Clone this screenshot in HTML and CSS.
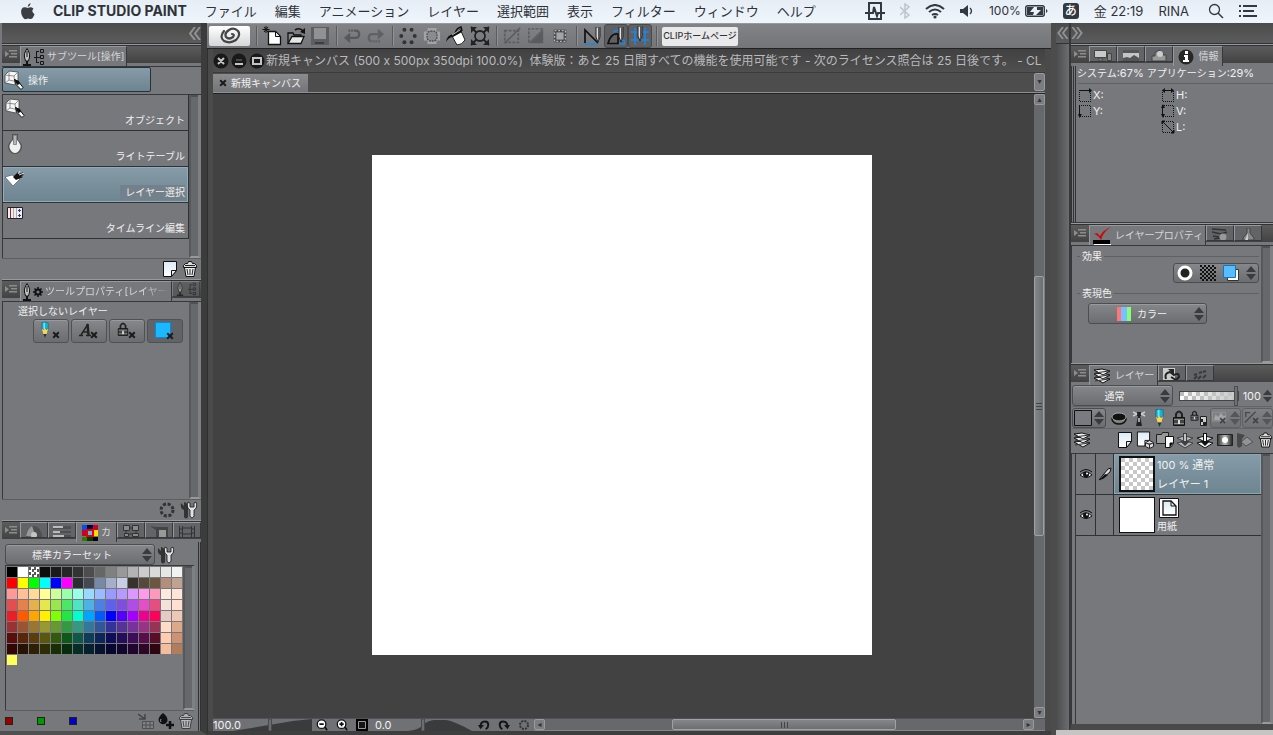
FILE: index.html
```html
<!DOCTYPE html>
<html lang="ja">
<head>
<meta charset="utf-8">
<meta name="viewport" content="width=device-width, initial-scale=1">
<title>CLIP STUDIO PAINT</title>
<link rel="stylesheet" href="styles.css">
</head>
<body>
<svg class="sprite" aria-hidden="true">
  <defs>
    <pattern id="check" width="4" height="4" patternUnits="userSpaceOnUse"><path fill="#111" d="M0 0h2v2H0zM2 2h2v2H2z"/></pattern>
    <linearGradient id="paper" x2="0" y2="1"><stop stop-color="#dcebf5"/><stop offset="1" stop-color="#fff"/></linearGradient>
    <linearGradient id="metal" x2="1"><stop stop-color="#333"/><stop offset=".5" stop-color="#bbb"/><stop offset="1" stop-color="#222"/></linearGradient>
  </defs>
  <symbol id="menu" viewBox="0 0 12 10"><path fill="#8b8c8e" d="M0 2l4 3-4 3zM4 1h8v1.500H4zM6 4h6v1.500H6zM4 7h8v1.500H4z"/></symbol>
  <symbol id="updown" viewBox="0 0 10 14"><path fill="#3a3b3d" d="M5 0l5 6H0zM0 8h10l-5 6z"/></symbol>
  <symbol id="pen" viewBox="0 0 8 18"><path fill="#c4c4c4" stroke="#111" d="M4 .5C2 4 1 6 1.500 9l1 4h3l1-4C7 6 6 4 4 .5z"/><path stroke="#111" d="M4 3v6"/><path fill="#111" d="M3 13h2v3h3v2H0v-2h3z"/></symbol>
  <symbol id="tree" viewBox="0 0 12 18"><path fill="none" stroke="#161616" d="M3.500 3v12M1 9.500h6M3 3.500h3M3 14.500h3M7.500 1.500h3v3h-3zM7.500 7.500h3v3h-3zM7.500 13.500h3v3h-3z"/></symbol>
  <symbol id="gear" viewBox="0 0 10 10"><circle cx="5" cy="5" r="2.600" fill="none" stroke="#111" stroke-width="2"/><path stroke="#111" stroke-width="1.500" d="M5 0v2M5 8v2M0 5h2M8 5h2M1.500 1.500L3 3M7 7l1.500 1.500M8.500 1.500L7 3M3 7L1.500 8.500"/></symbol>
  <symbol id="object" viewBox="0 0 20 20"><path fill="#f6f6f6" stroke="#444" stroke-width=".8" d="M1 5l4-4 9 1v10l-3 3-10-2z"/><path fill="none" stroke="#777" stroke-width=".8" d="M1 5l9 1 4-4M10 6l1 9M5 1v9l-4 3M5 10l9 2"/><path fill="#fff" stroke="#111" d="M10.500 9.500l4 2 4.500 6-2 2-5-5z"/><path fill="#111" d="M10 9l5 2 1 3-3 1z"/></symbol>
  <symbol id="bulb" viewBox="0 0 18 20"><path fill="#555" d="M6 0h6v6q5 4 4 8-2 6-7 6t-7-6q-1-4 4-8z"/><path fill="#f0f0f0" d="M7 6q-5 5-3 9 2 4 5 4t5-4q2-4-3-9z"/><path fill="#b5b5b5" stroke="#888" d="M7.500 1.500h3v9h-3z"/></symbol>
  <symbol id="selectlayer" viewBox="0 0 20 18"><path fill="#fff" stroke="#444" stroke-width=".6" d="M0 7l7-2 8 4-7 7z"/><path fill="#111" d="M8 7l5-5 1 2 5-2-2 2 2 1-3 1 2 1-7 3z"/><path stroke="#ddd" d="M13 4l2-3M14 5l5-2"/></symbol>
  <symbol id="timeline" viewBox="0 0 18 14"><path fill="#eee" stroke="#222" d="M1.500 1.500h15v11h-15z"/><path stroke="#aaa" d="M7.500 2v10M10.500 2v10"/><path stroke="#922" d="M4.500 2v10"/><path stroke="#33a" d="M12 4.500h3M13.500 3v3M12 9.500h3M13.500 8v3"/></symbol>
  <symbol id="page" viewBox="0 0 16 16"><path fill="url(#paper)" stroke="#111" d="M1.500 .5h13v9l-5 6h-8z"/><path fill="#eee" stroke="#111" d="M14.500 9.500h-5v6z"/></symbol>
  <symbol id="trash" viewBox="0 0 16 16"><path fill="#eee" stroke="#111" d="M2.500 6.500h11l-1.500 9H4z"/><path fill="#ddd" stroke="#111" d="M1.500 4.500l2-2h2L6.500.5h3l1 2h2l2 2v2h-13z"/><path stroke="#222" d="M5 8l1 6M8 8v6M11 8l-1 6M3 4.500h10"/></symbol>
  <symbol id="x" viewBox="0 0 10 10"><path stroke="#1b1b1b" stroke-width="2.500" d="M1.500 1.500l7 7M8.500 1.500l-7 7"/></symbol>
  <symbol id="pencil" viewBox="0 0 10 20"><path fill="#15b4d6" stroke="#0a5365" stroke-width=".6" d="M1 1q4-2 8 0v8H1z"/><path fill="#6de3f5" d="M3 1h2v8H3z"/><path fill="#ffd34d" d="M1 8l2 2 2-2 2 2 2-2-2 7H3z"/><path fill="#153a48" d="M3 15h4l-2 5z"/></symbol>
  <symbol id="lock" viewBox="0 0 14 16"><path fill="none" stroke="#222" stroke-width="2" d="M4 8V4q3-5 6 0v4"/><path fill="#444" stroke="#111" d="M1.500 7.500h11v8h-11z"/><path stroke="#888" d="M2 9.500h10M2 13.500h10"/><path fill="#ddd" d="M6 10h2v4H6z"/></symbol>
  <symbol id="ring" viewBox="0 0 18 18"><circle cx="9" cy="9" r="6" fill="none" stroke="#333" stroke-width="3" stroke-dasharray="3 1.700"/></symbol>
  <symbol id="wrench" viewBox="0 0 18 18"><path fill="#333" d="M1 2l3 3V1q6 2 4 7v8q-2 3-4 0V9Q0 8 1 2z"/><path fill="#e2e2e2" stroke="#111" stroke-width=".8" d="M8 1q-2 6 2 8v6q2 4 4 0V9q4-2 2-8l-2 1v4h-4V2z"/></symbol>
  <symbol id="palette" viewBox="0 0 16 16"><path fill="#0a50dc" d="M0 0h5v5H0z"/><path fill="#00003c" d="M5 0h6v5H5z"/><path fill="#c8002d" d="M11 0h5v5h-5zM0 5h5v6H0z"/><path fill="#e60000" d="M4 4h8v8H4z"/><path fill="#ffdc00" d="M12 5h4v6h-4z"/><path fill="#5bf" d="M6 6h4v4H6z"/><path fill="#337a00" d="M0 12h5v4H0z"/><path fill="#053805" d="M5 12h6v4H5z"/><path d="M11 12h5v4h-5z"/></symbol>
  <symbol id="wheel" viewBox="0 0 18 12"><path fill="#4e4f51" d="M1 12a8 11 0 0 1 16 0z"/><path fill="#999" d="M1 11Q3 3 7 1l4 11z"/><circle cx="9" cy="10" r="3" fill="#c5c5c5"/></symbol>
  <symbol id="sliders" viewBox="0 0 18 12"><path fill="#4e4f51" d="M0 1h18v3H0zM0 6h18v2H0zM0 10h18v2H0z"/><path fill="#bbb" d="M0 1h10v2H0zM0 6h7v2H0zM0 10h11v2H0z"/></symbol>
  <symbol id="mix" viewBox="0 0 18 12"><path fill="#898989" stroke="#333" d="M1.500.5h6v5h-6zM10.500.5h6v5h-6zM2.500 8.500h4v3h-4zM10.500 8.500h6v3h-6z"/><path stroke="#333" d="M7 3h4M7 9h4M4 5v4M14 5v4"/></symbol>
  <symbol id="history" viewBox="0 0 18 12"><path fill="#444" d="M0 1l6 1h12v10H6V5z"/><path fill="#999" d="M9 5h7v7H9z"/></symbol>
  <symbol id="film" viewBox="0 0 18 12"><path fill="none" stroke="#333" d="M1.500 1v11M4.500 1v11M13.500 1v11M16.500 1v11M4 3h10M4 9h10M1 4h4M1 8h4M13 4h4M13 8h4"/></symbol>
  <symbol id="grid" viewBox="0 0 16 16"><path fill="#808184" stroke="#505154" d="M4.500 8.500h11v7h-11zM4 12h11M8 9v6M12 9v6"/><path fill="none" stroke="#444" stroke-width="1.500" d="M0 1l7 5M1 6h6V1"/></symbol>
  <symbol id="drop" viewBox="0 0 16 16"><path fill="#111" d="M5 0q6 5 4 9-3 4-7 1-4-4 3-10z"/><path stroke="#999" d="M3 6q-1 2 0 3"/><path stroke="#111" stroke-width="2.500" d="M12 8v8M8 12h8"/></symbol>
  <symbol id="clip" viewBox="0 0 22 18"><path fill="none" stroke="#444548" stroke-width="2.200" stroke-linecap="round" d="M5 4Q0 10 5 14q6 3 12-1 5-5 2-9-4-4-9-1-5 3-3 7 3 3 7 0 2-3-1-3"/></symbol>
  <symbol id="new" viewBox="0 0 20 20"><path fill="#fff" stroke="#111" stroke-width="1.300" d="M6.500 5.500h7l5 5v8h-12z"/><path fill="#dde7ee" stroke="#111" d="M13.500 5.500v5h5z"/><path stroke="#111" d="M4 0v7M.5 3.500h7M2 1l4 5M6 1L2 6"/></symbol>
  <symbol id="open" viewBox="0 0 20 20"><path fill="#888" stroke="#111" stroke-width="1.300" d="M2 17V7h5l1 2h7v3"/><path fill="#e6e6e6" stroke="#111" stroke-width="1.300" d="M2 17.500l4-7h12l-3 7z"/><path fill="none" stroke="#111" stroke-width="1.500" d="M9 4q5-3 8 1"/><path fill="#111" d="M19 2v6l-5-2z"/></symbol>
  <symbol id="save" viewBox="0 0 20 20"><path fill="#5d5e60" d="M1 1h18v18H1z"/><path fill="#909194" d="M4 2h12v11H4z"/><path fill="#3e3e40" d="M5 16h9v2H5z"/></symbol>
  <symbol id="undo" viewBox="0 0 20 20"><path fill="none" stroke="#58595b" stroke-width="2.500" stroke-dasharray="2 1 2 1 30" d="M6 4h8q4 0 4 4t-4 4H6"/><path fill="#58595b" d="M1 12l7-6v12z"/></symbol>
  <symbol id="redo" viewBox="0 0 20 20"><path fill="none" stroke="#606163" stroke-width="2.500" stroke-dasharray="20 1 2 1 2 1 2" d="M14 8H6q-4 0-4 4t4 4h9"/><path fill="#606163" d="M12 2l7 6-7 6z"/></symbol>
  <symbol id="dots" viewBox="0 0 20 20"><g fill="#333"><circle cx="6" cy="3" r="2.200"/><circle cx="14" cy="3" r="2.200"/><circle cx="2.500" cy="10" r="2.200"/><circle cx="17.500" cy="10" r="2.200"/><circle cx="6" cy="17" r="2.200"/><circle cx="14" cy="17" r="2.200"/></g></symbol>
  <symbol id="outside" viewBox="0 0 20 20"><path fill="#a2a3a5" d="M5 1h10v4h4v10h-4v4H5v-4H1V5h4z"/><rect x="4.500" y="4.500" width="11" height="11" rx="4" fill="#8a8b8d" stroke="#4b4b4d" stroke-width="1.500" stroke-dasharray="2 1"/></symbol>
  <symbol id="bucket" viewBox="0 0 20 20"><path fill="#fff" stroke="#222" d="M6 10l9-5 4 9q-3 5-8 5z"/><path fill="#111" d="M0 16q1-7 7-8l7-5 2 3-9 5q-4 0-7 5z"/><path fill="none" stroke="#111" stroke-width="1.500" d="M9 8q1-6 6-7l1 4"/><path stroke="#bbb" d="M6 9l8-5"/></symbol>
  <symbol id="transform" viewBox="0 0 20 20"><circle cx="10" cy="10" r="5" fill="none" stroke="#222" stroke-width="1.800"/><path stroke="#222" stroke-width="2" d="M1 1l6 6M19 1l-6 6M1 19l6-6M19 19l-6-6"/><path fill="#222" d="M1 1h6L1 7zM13 1h6v6zM1 13v6h6zM19 13v6h-6z"/></symbol>
  <symbol id="deselect" viewBox="0 0 20 20"><path fill="none" stroke="#5d5e61" stroke-width="2" stroke-dasharray="3 1.500" d="M2 4h15v13H2z"/><path stroke="#5d5e61" stroke-width="2" d="M2 18L19 1"/></symbol>
  <symbol id="invert" viewBox="0 0 20 20"><path fill="#5a5b5e" d="M18 3v15H3z"/><path fill="none" stroke="#57585a" stroke-width="1.500" stroke-dasharray="3 1.500" d="M2 17V2h15"/><path stroke="#57585a" d="M2 18L18 2"/></symbol>
  <symbol id="border" viewBox="0 0 20 20"><path fill="#47484a" d="M3 3h14v14H3z"/><path fill="#a3a4a6" d="M6 6h8v8H6z"/><path fill="none" stroke="#b4b5b7" stroke-width="1.500" stroke-dasharray="2 2" d="M4 4h12v12H4z"/></symbol>
  <symbol id="nib" viewBox="0 0 6 16"><path fill="#ddd" stroke="#222" d="M1 0h4v10l-2 5-2-5z"/><path fill="#555" d="M3 0h2v10l-2 4z"/></symbol>
  <symbol id="snap1" viewBox="0 0 20 20"><path fill="none" stroke="#1c86e8" stroke-width="1.500" d="M3 16v2h13"/><path fill="none" stroke="#111" stroke-width="1.700" d="M3 17V4l13 13"/><use href="#nib" x="13" y="1" width="6" height="16"/></symbol>
  <symbol id="snap2" viewBox="0 0 20 20"><path fill="none" stroke="#1c86e8" stroke-width="1.500" d="M7 6l5-2M15 14q5 0 3 4h-5"/><path fill="none" stroke="#111" stroke-width="1.700" d="M2 17.500q3-11 10-9.500v9.500z"/><use href="#nib" x="12" y="1" width="6" height="16"/></symbol>
  <symbol id="snap3" viewBox="0 0 20 20"><path fill="none" stroke="#1c86e8" stroke-width="1.500" d="M5 2v17M15 2v17M1 6h18M1 14h18"/><use href="#nib" x="7" y="0" width="6" height="16"/></symbol>
  <symbol id="eye" viewBox="0 0 14 12"><path fill="#eee" stroke="#111" d="M1 7q6-6 12 0-6 5-12 0z"/><circle cx="7" cy="6.500" r="3" fill="#111"/><circle cx="8" cy="5.500" r="1" fill="#fff"/><path fill="none" stroke="#111" d="M1 4q6-5 12 0"/></symbol>
  <symbol id="layers" viewBox="0 0 18 16"><g fill="#eee" stroke="#111"><path d="M1 10l8-1 8 2-7 4z"/><path d="M1 6l8-1 8 2-7 4z"/><path d="M1 2l8-1 8 2-7 4z"/></g><path stroke="#333" d="M2 5l14-2M2 9l14-2M2 13l14-2"/></symbol>
  <symbol id="merge" viewBox="0 0 18 18"><path fill="#eee" stroke="#111" d="M1 7l8-2 8 2-8 4z"/><path fill="#eee" stroke="#111" d="M1 12l8-2 8 2-8 5z"/><path fill="#111" d="M7 2h4v8h3l-5 5-5-5h3z"/><path fill="#fff" d="M8 3h2v7H8z"/></symbol>
  <symbol id="magnify" viewBox="0 0 14 14"><circle cx="6.500" cy="6" r="5" fill="#fff" stroke="#111" stroke-width="1.500"/><path stroke="#111" stroke-width="2" d="M10 9l3 4M4 6h5"/></symbol>
  <symbol id="rot" viewBox="0 0 14 14"><path fill="none" stroke="#151515" stroke-width="2.300" d="M3 9q0-6 5-6 4 0 4 4 0 3-3 5"/><path fill="#151515" d="M0 7h7l-4 5z"/></symbol>
</svg>

<header class="menubar">
  <nav class="menus" aria-label="メニュー">
    <svg class="apple" width="14" height="17" viewBox="0 0 14 17" aria-label="Apple"><path fill="#3b3e43" d="M9.500 0q.3 2.500-2.700 3.900Q6.500 1.500 9.500 0zM7 5q3-1.600 5.600.8-3 2.300.9 5.400Q11.500 16.800 9 16q-2-1-3.600 0Q2.700 17 .7 12 -1.200 5.500 3 4.300 5 4 7 5z"/></svg>
    <button class="app-name">CLIP STUDIO PAINT</button>
    <button>ファイル</button><button>編集</button><button>アニメーション</button><button>レイヤー</button><button>選択範囲</button><button>表示</button><button>フィルター</button><button>ウィンドウ</button><button>ヘルプ</button>
  </nav>
  <div class="status">
    <svg width="20" height="18" viewBox="0 0 20 18"><path fill="none" stroke="#333940" stroke-width="2" d="M4 1h12v16H4zM0 11h8l1-6 3 9 1-3h7"/></svg>
    <svg width="10" height="16" viewBox="0 0 10 16"><path fill="none" stroke="#bcc4cc" stroke-width="1.500" d="M0 4l9 8-4 3V1l4 3-9 8"/></svg>
    <svg width="20" height="15" viewBox="0 0 20 15"><g fill="none" stroke="#333940" stroke-width="2"><path d="M1 5q9-8 18 0M4 8q6-5 12 0M7 11q3-2 6 0"/></g><circle cx="10" cy="13" r="1.600" fill="#333940"/></svg>
    <svg width="14" height="12" viewBox="0 0 14 12"><path fill="#333940" d="M0 4h3l5-4v12L3 8H0z"/><path fill="none" stroke="#333940" stroke-width="1.300" d="M10 3q3 3 0 6"/></svg>
    <span class="battery">100%<svg width="23" height="12" viewBox="0 0 23 12"><rect x=".7" y=".7" width="18.600" height="10.600" rx="2" fill="none" stroke="#333940" stroke-width="1.400"/><path fill="#333940" d="M2 2h7L5 7h4l-1 3H2zM12 2h6v8h-7l5-5h-4zM21 4q3 2 0 4z"/></svg></span>
    <span class="ime">あ</span>
    <time>金 22:19</time>
    <span>RINA</span>
    <svg class="search" width="16" height="16" viewBox="0 0 16 16"><circle cx="6.500" cy="6.500" r="5" fill="none" stroke="#333940" stroke-width="1.300"/><path stroke="#333940" stroke-width="1.500" d="M10 10l5 5"/></svg>
    <svg width="18" height="12" viewBox="0 0 18 12"><path fill="#333940" d="M0 0h2v2H0zM4 0h14v2H4zM0 5h2v2H0zM4 5h11v2H4zM0 10h2v2H0zM4 10h14v2H4z"/></svg>
  </div>
</header>

<main class="workspace">
  <aside class="dock dock-left">
    <div class="dock-head"><button class="chev" aria-label="折りたたむ"><svg width="12" height="13" viewBox="0 0 12 13"><path fill="none" stroke="#919294" stroke-width="2" d="M6 0L1 6.500 6 13M11 0L6 6.500 11 13"/></svg></button></div>

    <section class="panel">
      <div class="tabs">
        <button class="tab-menu" aria-label="メニュー"><svg width="12" height="10"><use href="#menu"/></svg></button>
        <button class="tab active"><svg width="8" height="18"><use href="#pen"/></svg><svg width="12" height="18"><use href="#tree"/></svg><span>サブツール[操作]</span></button>
      </div>
      <div class="group"><button class="group-btn"><svg width="20" height="20"><use href="#object"/></svg>操作</button></div>
      <div class="scroller">
        <div class="subtools">
          <button class="subtool"><svg width="20" height="20"><use href="#object"/></svg><span>オブジェクト</span></button>
          <button class="subtool"><svg width="20" height="20"><use href="#bulb"/></svg><span>ライトテーブル</span></button>
          <button class="subtool selected"><svg width="20" height="18"><use href="#selectlayer"/></svg><span>レイヤー選択</span></button>
          <button class="subtool"><svg width="20" height="14"><use href="#timeline"/></svg><span>タイムライン編集</span></button>
        </div>
        <div class="gutter"></div>
      </div>
      <div class="foot"><button aria-label="複製"><svg width="16" height="16"><use href="#page"/></svg></button><button aria-label="削除"><svg width="16" height="16"><use href="#trash"/></svg></button></div>
    </section>

    <section class="panel grow">
      <div class="tabs">
        <button class="tab-menu" aria-label="メニュー"><svg width="12" height="10"><use href="#menu"/></svg></button>
        <button class="tab active wide"><svg width="8" height="18"><use href="#pen"/></svg><svg width="10" height="10"><use href="#gear"/></svg><span class="fade">ツールプロパティ[レイヤー選択]</span></button>
        <button class="tab ghost" aria-label="サブツール"><svg width="8" height="14"><use href="#pen"/></svg><svg width="10" height="14"><use href="#tree"/></svg></button>
      </div>
      <div class="scroller grow">
        <div class="props">
          <span class="label">選択しないレイヤー</span>
          <div class="prop-row">
            <button aria-label="下描き"><svg width="30" height="20" viewBox="0 0 30 20"><use href="#pencil" x="5" y="0" width="8" height="18"/><use href="#x" x="16" y="10" width="8" height="8"/></svg></button>
            <button aria-label="文字"><svg width="30" height="20" viewBox="0 0 30 20"><path fill="none" stroke="#222" stroke-width="1.400" d="M7 14l7-11M9 11h6M5 14.500h4M12 14.500h5"/><path stroke="#222" stroke-width="2.500" d="M13.500 3l1 11"/><use href="#x" x="16" y="10" width="8" height="8"/></svg></button>
            <button aria-label="ロック"><svg width="30" height="20" viewBox="0 0 30 20"><use href="#lock" x="5" y="1" width="12" height="14"/><use href="#x" x="16" y="10" width="8" height="8"/></svg></button>
            <button class="pressed" aria-label="用紙"><svg width="30" height="20" viewBox="0 0 30 20"><path fill="#1cb8ff" stroke="#0d86d8" d="M5.500 1.500h15v15h-15z"/><use href="#x" x="16" y="11" width="8" height="8"/></svg></button>
          </div>
        </div>
        <div class="gutter"></div>
      </div>
      <div class="foot"><button aria-label="リセット"><svg width="18" height="18"><use href="#ring"/></svg></button><button aria-label="詳細"><svg width="18" height="18"><use href="#wrench"/></svg></button></div>
    </section>

    <section class="panel">
      <div class="tabs">
        <button class="tab-menu" aria-label="メニュー"><svg width="12" height="10"><use href="#menu"/></svg></button>
        <button class="tab" aria-label="カラーサークル"><svg width="18" height="12"><use href="#wheel"/></svg></button>
        <button class="tab" aria-label="カラースライダー"><svg width="18" height="12"><use href="#sliders"/></svg></button>
        <button class="tab active set"><svg width="16" height="16"><use href="#palette"/></svg><span>カ</span></button>
        <button class="tab" aria-label="中間色"><svg width="18" height="12"><use href="#mix"/></svg></button>
        <button class="tab" aria-label="近似色"><svg width="18" height="12"><use href="#history"/></svg></button>
        <button class="tab" aria-label="カラーヒストリー"><svg width="18" height="12"><use href="#film"/></svg></button>
      </div>
      <div class="colors">
        <div class="set-row">
          <label class="select"><select aria-label="カラーセット"><option>標準カラーセット</option></select><svg width="10" height="14"><use href="#updown"/></svg></label>
          <button aria-label="カラーセットを編集"><svg width="18" height="18"><use href="#wrench"/></svg></button>
        </div>
        <div class="scroller swatch-area"><div class="swatches" id="swatches"></div><div class="gutter"></div></div>
        <div class="foot colors-foot">
          <span class="chips"><i class="chip red"></i><i class="chip green"></i><i class="chip blue"></i></span>
          <button aria-label="色を置き換え"><svg width="16" height="16"><use href="#grid"/></svg></button><button aria-label="色を追加"><svg width="16" height="16"><use href="#drop"/></svg></button><button class="dim" aria-label="色を削除"><svg width="16" height="16"><use href="#trash"/></svg></button>
        </div>
      </div>
    </section>
  </aside>

  <section class="editor">
    <div class="toolbar">
      <button class="clip" aria-label="CLIP STUDIO"><svg width="22" height="18"><use href="#clip"/></svg></button>
      <i class="sep"></i>
      <button aria-label="新規"><svg width="20" height="20"><use href="#new"/></svg></button><button aria-label="開く"><svg width="20" height="20"><use href="#open"/></svg></button><button aria-label="保存"><svg width="20" height="20"><use href="#save"/></svg></button>
      <i class="sep"></i>
      <button aria-label="取り消し"><svg width="18" height="18"><use href="#undo"/></svg></button><button aria-label="やり直し"><svg width="18" height="18"><use href="#redo"/></svg></button>
      <i class="sep"></i>
      <button aria-label="消去"><svg width="18" height="18"><use href="#dots"/></svg></button><button aria-label="選択範囲外を消去"><svg width="18" height="18"><use href="#outside"/></svg></button><button aria-label="塗りつぶし"><svg width="20" height="20"><use href="#bucket"/></svg></button><button aria-label="拡大縮小回転"><svg width="20" height="20"><use href="#transform"/></svg></button>
      <i class="sep"></i>
      <button aria-label="選択を解除"><svg width="18" height="18"><use href="#deselect"/></svg></button><button aria-label="選択範囲を反転"><svg width="18" height="18"><use href="#invert"/></svg></button><button aria-label="境界線"><svg width="18" height="18"><use href="#border"/></svg></button>
      <i class="sep"></i>
      <button aria-label="定規にスナップ"><svg width="20" height="20"><use href="#snap1"/></svg></button><button class="on" aria-label="特殊定規にスナップ"><svg width="20" height="20"><use href="#snap2"/></svg></button><button class="on" aria-label="グリッドにスナップ"><svg width="20" height="20"><use href="#snap3"/></svg></button>
      <i class="sep"></i>
      <button class="home">CLIPホームページ</button>
    </div>

    <div class="window">
      <div class="titlebar">
        <svg width="52" height="16" viewBox="0 0 52 16"><g fill="#191919"><circle cx="8" cy="8" r="7.500"/><circle cx="26" cy="8" r="7.500"/><circle cx="44" cy="8" r="7.500"/></g><path fill="none" stroke="#c4c4c4" stroke-width="2" d="M5 5l6 6M11 5l-6 6M22 11h8M40 5h8v6h-8z"/><path stroke="#777" d="M23 7h6"/></svg>
        <span>新規キャンバス (500 x 500px 350dpi 100.0%)&nbsp; 体験版：あと 25 日間すべての機能を使用可能です - 次のライセンス照合は 25 日後です。 - CL</span>
      </div>
      <div class="doc-tabs">
        <button class="doc-tab"><svg width="8" height="8"><use href="#x"/></svg>新規キャンバス</button>
        <button class="arrow tall" aria-label="タブ一覧">▾</button>
      </div>
      <div class="stage">
        <div class="viewport"><div class="canvas"></div></div>
        <div class="vscroll"><button class="arrow" aria-label="上へ">▴</button><i class="space"></i><i class="thumb"></i><i class="space"></i><button class="arrow" aria-label="下へ">▾</button></div>
      </div>
      <div class="navbar">
        <label class="dial zoom"><svg viewBox="0 0 99 12" preserveAspectRatio="none"><path fill="#3a3b3d" d="M20 12L80 2l19-2v12z"/><path fill="#6b6c6f" stroke="#4a4a4c" d="M55.500 0h3v12h-3z"/></svg><input value="100.0" aria-label="ズーム"></label>
        <button aria-label="ズームアウト"><svg width="14" height="12"><use href="#magnify"/></svg></button>
        <button aria-label="ズームイン"><svg width="14" height="12" viewBox="0 0 14 14"><use href="#magnify" width="14" height="14"/><path stroke="#111" stroke-width="2" d="M6.500 3.500v5"/></svg></button>
        <button aria-label="全体表示"><svg width="12" height="12" viewBox="0 0 12 12"><path d="M0 0h12v12H0z"/><path fill="#151515" stroke="#999" d="M2.500 2.500h7v7h-7z"/></svg></button>
        <label class="dial turn"><svg viewBox="0 0 97 12" preserveAspectRatio="none"><path fill="#3a3b3d" d="M33 12q10-1 14-5 4-5 12-6h12q8 1 26 11z"/><path fill="#6b6c6f" stroke="#4a4a4c" d="M46.500 0h3v12h-3z"/></svg><input value="0.0" aria-label="回転"></label>
        <button aria-label="左回転"><svg width="14" height="12"><use href="#rot"/></svg></button>
        <button aria-label="右回転" class="flip"><svg width="14" height="12"><use href="#rot"/></svg></button>
        <button aria-label="回転をリセット"><svg width="14" height="12"><use href="#ring"/></svg></button>
        <div class="hscroll"><button class="arrow" aria-label="左へ">◂</button><i class="space"></i><i class="thumb"></i><i class="space"></i><button class="arrow" aria-label="右へ">▸</button></div>
      </div>
    </div>
  </section>

  <aside class="dock-right">
    <div class="rail"><button class="rail-head" aria-label="広げる"><svg width="12" height="12" viewBox="0 0 12 13"><path fill="none" stroke="#919294" stroke-width="2" d="M6 0L1 6.500 6 13M11 0L6 6.500 11 13"/></svg></button></div>
    <div class="dock">
      <div class="dock-head start"><button class="chev" aria-label="折りたたむ"><svg width="12" height="12" viewBox="0 0 12 13"><path fill="none" stroke="#919294" stroke-width="2" d="M1 0l5 6.500L1 13M6 0l5 6.500L6 13"/></svg></button></div>

      <section class="panel">
        <div class="tabs">
          <button class="tab-menu" aria-label="メニュー"><svg width="12" height="10"><use href="#menu"/></svg></button>
          <button class="tab" aria-label="ナビゲーター"><svg width="18" height="12" viewBox="0 0 18 12"><path fill="#c9c9c9" stroke="#444" d="M.5 1.500h12v7H.500z"/><path fill="#888" stroke="#444" d="M13.500 4.500h4v7h-4zM5 9h3v3H5z"/></svg></button>
          <button class="tab" aria-label="サブビュー"><svg width="16" height="12" viewBox="0 0 16 12"><path fill="#c5c5c5" d="M0 1h16v11H0z"/><path fill="#555" d="M0 1h16v3H0zM0 12V9l4-1 3 1 4-3 5 3v3z"/></svg></button>
          <button class="tab" aria-label="アイテムバンク"><svg width="16" height="12" viewBox="0 0 16 12"><path fill="#999" stroke="#444" d="M1 12V7h3V4l4-3 4 3v2h3v6z"/><circle cx="9" cy="5" r="3" fill="#ccc"/></svg></button>
          <button class="tab active info-tab"><svg width="16" height="16" viewBox="0 0 16 16"><circle cx="8" cy="8" r="7.500" fill="#262626"/><path fill="#fff" d="M7 2h3v3H7zM6 6h4v5h1v2H5v-2h2V8H6z"/></svg><span>情報</span></button>
        </div>
        <div class="info">
          <p>システム<b>:67% </b>アプリケーション<b>:29%</b></p>
          <div class="coords">
            <span><svg width="14" height="14" viewBox="0 0 14 14"><path class="dash" d="M1.500 2.500h11v11h-11z"/><path fill="#111" d="M1 2h10V0l3 2.500-3 2.500V3H1z"/></svg>X:</span>
            <span><svg width="14" height="14" viewBox="0 0 14 14"><path class="dash" d="M1.500 2.500h11v11h-11z"/><path fill="#111" d="M1 2.500L4 0v2h6V0l3 2.500L10 5V3H4v2z"/></svg>H:</span>
            <span><svg width="14" height="14" viewBox="0 0 14 14"><path class="dash" d="M1.500 1.500h11v11h-11z"/><path fill="#111" d="M1 1h1v9h2l-2.500 4L0 10h1z"/></svg>Y:</span>
            <span><svg width="14" height="14" viewBox="0 0 14 14"><path class="dash" d="M1.500 1.500h11v11h-11z"/><path fill="#111" d="M2 0l2 4H2v6h2l-2 4-2-4h1V4H0z"/></svg>V:</span>
            <span></span>
            <span><svg width="14" height="14" viewBox="0 0 14 14"><path class="dash" d="M1.500 1.500h11v11h-11z"/><path fill="#111" stroke="#111" d="M1 1h3L1 4zM2 2l9 9M13 13h-3l3-3z"/></svg>L:</span>
          </div>
        </div>
      </section>

      <section class="panel">
        <div class="tabs">
          <button class="tab-menu" aria-label="メニュー"><svg width="12" height="10"><use href="#menu"/></svg></button>
          <button class="tab active layerprop"><svg width="20" height="18" viewBox="0 0 20 18"><path d="M1 13h17v4H1z"/><path fill="#fff" d="M2 17h17v1H2z"/><path fill="#c70b0b" d="M2 7l3-1 3 3q3-6 11-9-8 5-10 13-3-5-7-6z"/></svg><span>レイヤープロパティ</span></button>
          <button class="tab" aria-label="検索"><svg width="16" height="12" viewBox="0 0 16 12"><path fill="none" stroke="#333" stroke-width="1.500" d="M0 1l14 1M0 4l9 2 6-2M1 8l6 1M2 11l6-1"/><circle cx="11" cy="9" r="3.500" fill="#999"/></svg></button>
          <button class="tab" aria-label="自動アクション"><svg width="14" height="12" viewBox="0 0 14 12"><path fill="#888" stroke="#444" d="M6 0h3v5l4 5v2H2v-2l4-5z"/><path fill="#ccc" d="M7 5l-3 7h3z"/></svg></button>
        </div>
        <div class="scroller">
          <div class="layer-props">
            <fieldset><legend>効果</legend><div class="effects">
              <button aria-label="境界効果"><svg width="16" height="16" viewBox="0 0 16 16"><circle cx="8" cy="8" r="6" fill="#222" stroke="#fff" stroke-width="3"/></svg></button>
              <button aria-label="トーン"><svg width="16" height="16"><path fill="url(#check)" d="M0 0h16v16H0z"/></svg></button>
              <button aria-label="レイヤーカラー"><svg width="16" height="16" viewBox="0 0 16 16"><path fill="#fff" stroke="#333" d="M4.500 4.500h11v11h-11z"/><path fill="#58bdff" stroke="#1a75b5" d="M.5.500h12v12H.500z"/></svg></button>
              <svg width="10" height="14"><use href="#updown"/></svg>
            </div></fieldset>
            <fieldset><legend>表現色</legend>
              <label class="select expr"><svg class="rgb" width="14" height="14" viewBox="0 0 14 14"><path fill="#ff7676" d="M0 0h4v14H0z"/><path fill="#7abfff" d="M4 0h6v14H4z"/><path fill="#85ff73" d="M10 0h4v14h-4z"/></svg><select aria-label="表現色"><option>カラー</option></select><svg width="10" height="14"><use href="#updown"/></svg></label>
            </fieldset>
          </div>
          <div class="gutter"></div>
        </div>
      </section>

      <section class="panel grow">
        <div class="tabs">
          <button class="tab-menu" aria-label="メニュー"><svg width="12" height="10"><use href="#menu"/></svg></button>
          <button class="tab active layer-tab"><svg width="18" height="16"><use href="#layers"/></svg><span>レイヤー</span></button>
          <button class="tab" aria-label="変換"><svg width="18" height="12" viewBox="0 0 18 12"><path fill="#ccc" d="M0 0h12v12H0z"/><path fill="none" stroke="#222" stroke-width="2" d="M3 11q-2-6 4-7l4 3q5-3 5 2l-3 3-5-3"/><path fill="#222" d="M5 1h6v6z"/></svg></button>
          <button class="tab" aria-label="アニメーション"><svg width="14" height="10" viewBox="0 0 14 10"><path stroke="#3a3a3c" stroke-width="2" d="M1 5l3-1M6 3l3-1M10 2l3-1M1 9l3-3M5 9l3-3M10 8l3-3"/></svg></button>
        </div>
        <div class="layer-tools">
          <div class="tool-row">
            <label class="select mode"><select aria-label="合成モード"><option>通常</option></select><svg width="10" height="14"><use href="#updown"/></svg></label>
            <input class="opacity" type="range" value="100" aria-label="不透明度">
            <output>100</output><svg width="9" height="14"><use href="#updown"/></svg>
          </div>
          <div class="tool-row">
            <button class="boxed" aria-label="パレットカラー"><svg width="18" height="16" viewBox="0 0 18 16"><path fill="#7a7b80" stroke="#111" d="M.5.500h17v15H.500z"/></svg><svg width="10" height="14"><use href="#updown"/></svg></button>
            <button class="tool" aria-label="クリッピング"><svg width="16" height="14" viewBox="0 0 16 14"><ellipse cx="8" cy="8" rx="7" ry="5" fill="#777" stroke="#111" stroke-width="1.500"/><ellipse cx="8" cy="6" rx="7" ry="4" fill="#111" stroke="#aaa"/></svg></button>
            <button class="tool" aria-label="参照レイヤー"><svg width="14" height="16" viewBox="0 0 14 16"><path fill="#222" d="M5 2h4v4H5zM6 6h2l2 10H4z"/><path stroke="#ccc" stroke-width="1.500" d="M1 2l4 2M1 6l4-2M13 2L9 4M13 6L9 4M7 8v4"/></svg></button>
            <button class="tool" aria-label="下描き"><svg width="9" height="18"><use href="#pencil"/></svg></button>
            <button class="tool" aria-label="ロック"><svg width="14" height="16"><use href="#lock"/></svg></button>
            <button class="tool" aria-label="透明ピクセルをロック"><svg width="18" height="16" viewBox="0 0 18 16"><use href="#lock" width="9" height="11"/><path fill="#ccc" stroke="#222" d="M10.500 6.500h6v9h-6z"/><path fill="#222" d="M10 9h3v3h-3zM13 12h4v3h-4z"/></svg></button>
            <button class="boxed dim" aria-label="マスク"><svg width="16" height="16" viewBox="0 0 18 16"><path fill="#888" stroke="#aaa" d="M.5 1.500h15v10H.500z"/><path fill="#ccc" d="M2 10l2-6 3 3 3-5 3 4 3-1-3 6z"/><use href="#x" x="8" y="7" width="8" height="8"/></svg><svg width="10" height="14"><use href="#updown"/></svg></button>
            <button class="boxed dim" aria-label="定規"><svg width="16" height="16" viewBox="0 0 18 16"><path stroke="#222" stroke-width="1.500" d="M1 13L13 1M1 2h6M2 1v6"/><use href="#x" x="9" y="7" width="8" height="8"/></svg><svg width="10" height="14"><use href="#updown"/></svg></button>
          </div>
          <div class="tool-row commands">
            <button class="tool first" aria-label="パレット"><svg width="18" height="16"><use href="#layers"/></svg></button>
            <button class="tool" aria-label="新規レイヤー"><svg width="16" height="16"><use href="#page"/></svg></button>
            <button class="tool" aria-label="新規3D"><svg width="18" height="18" viewBox="0 0 18 18"><use href="#page" width="15" height="16"/><path fill="#ddd" stroke="#222" d="M9.500 11.500l4-2 4 2v4l-4 2-4-2zM10 12l3.500 1.500L17 12M13.500 14v3"/></svg></button>
            <button class="tool" aria-label="新規フォルダー"><svg width="18" height="16" viewBox="0 0 18 16"><path fill="#999" stroke="#222" d="M.5 2.500h5l1-2h6v11H.500z"/><path fill="#fff" stroke="#111" d="M9.500 4.500h8v7l-3 4h-5z"/><path stroke="#111" d="M17 11h-3v4"/></svg></button>
            <button class="tool dim" aria-label="転写"><svg width="18" height="18"><use href="#merge"/></svg></button>
            <button class="tool" aria-label="結合"><svg width="18" height="18"><use href="#merge"/></svg></button>
            <button class="tool" aria-label="マスク作成"><svg width="16" height="12" viewBox="0 0 16 12"><path fill="url(#metal)" stroke="#222" d="M.5.500h15v11H.500z"/><circle cx="8" cy="6" r="3" fill="#fff"/></svg></button>
            <button class="tool dim" aria-label="適用"><svg width="18" height="16" viewBox="0 0 18 16"><path fill="#aaa" stroke="#333" d="M5 10l6-5 6 5-7 4z"/><path fill="#222" d="M1 1l8 2-3 4v7l-3 2-2-2z"/></svg></button>
            <button class="tool" aria-label="削除"><svg width="15" height="16"><use href="#trash"/></svg></button>
          </div>
        </div>
        <div class="scroller grow">
          <div class="layers">
            <div class="layer current">
              <button class="cell" aria-label="表示"><svg width="14" height="12"><use href="#eye"/></svg></button>
              <span class="cell edit"><svg width="14" height="14" viewBox="0 0 14 14"><path fill="#ddd" stroke="#111" d="M1 13l4-5 5-6 3-1-1 4-6 5z"/><path fill="#111" d="M1 13l6-6 3 1-5 4z"/></svg></span>
              <div class="body"><span class="thumbnail checker"></span><div class="meta"><span>100 % 通常</span><span>レイヤー 1</span></div></div>
            </div>
            <div class="layer">
              <button class="cell" aria-label="表示"><svg width="14" height="12"><use href="#eye"/></svg></button>
              <span class="cell edit"></span>
              <div class="body"><span class="thumbnail"></span><div class="meta paper"><svg width="20" height="20" viewBox="0 0 20 20"><path fill="#fff" stroke="#111" d="M.5.500h19v19H.500z"/><path fill="url(#paper)" stroke="#111" stroke-width="1.300" d="M4 3h8l5 5v9H4z"/><path fill="none" stroke="#111" d="M12 3v5h5"/></svg><span>用紙</span></div></div>
            </div>
          </div>
          <div class="gutter"></div>
        </div>
      </section>
    </div>
  </aside>
</main>
<script src="swatches.js"></script>
</body>
</html>
```

FILE: swatches.js
```js
const rows = [
  '000000 ffffff check 0d0d0d 1a1a1a 262626 333333 4d4d4d 666666 808080 999999 b3b3b3 cccccc d9d9d9 e6e6e6 f2f2f2',
  'ff0000 ffff00 00ff00 00ffff 0000ff ff00ff 2b2d32 454952 7889a5 a6afc9 c8cee4 37332c 54493b 6b5641 b48e7a c0a291',
  'ff9999 ffbf99 ffd999 ffff99 ccff99 99ffaa 99ffe8 99d9ff 99bbff 9999ff b899ff db99ff ff99ea ff99bb fde8e0 ffe5d8',
  'e64d4d e6804d e6b04d e6e64d 99e64d 4de668 4de6c4 4db0e6 4d80e6 6060ee 804de0 b04de6 e64dc8 e64d80 f5e1d9 ffdfcf',
  'ee1c24 ff5a00 ffa500 fff000 80ff00 22e644 00ffcc 00a5ff 005aff 0000ff 5500ff a500ff f00090 ff005a e5cbc3 edc8b4',
  '993333 995533 997733 999933 669933 339944 339980 337799 335599 333399 553399 773399 993388 993355 ffdcc8 dca88c',
  '590d0d 59260d 593d0d 59590d 33590d 0d591a 0d5946 0d3d59 0d2659 0d0d59 260d59 3d0d59 590d4a 590d26 ffccaf cc9272',
  '330606 261206 2e2006 2e2e06 1a2e06 062e0d 062e26 06202e 06122e 06062e 12062e 20062e 2e0626 2e0612 f5bd9d b07d5d',
  'ffff5c'
];
const grid = document.getElementById('swatches');
rows.join(' ').split(' ').forEach(color => {
  const swatch = document.createElement('button');
  swatch.className = color === 'check' ? 'swatch transparent' : 'swatch';
  swatch.setAttribute('aria-label', color);
  if (color !== 'check') swatch.style.backgroundColor = '#' + color;
  grid.append(swatch);
});
```

FILE: styles.css
```css
:root {
  --panel: #77787c;
  --line: #36383b;
  --hi: #98999c;
  --blue: linear-gradient(#869ca9, #6d8590);
  --bar: linear-gradient(#5c5c5d, #424243);
  --btn: linear-gradient(#86878a, #6c6d70);
}
* { box-sizing: border-box; }
body {
  margin: 0;
  min-height: 100vh;
  display: flex;
  flex-direction: column;
  background: #434344;
  color: #f0f0f0;
  font: 10px/14px Inter, "Noto Sans CJK JP", sans-serif;
}
button, input, select { margin: 0; padding: 0; border: 0; background: none; color: inherit; font: inherit; }
svg { display: block; flex: none; }
i { display: block; font-style: normal; }
.sprite { position: absolute; width: 0; height: 0; }
.grow { flex: 1; }
.dim { opacity: .55; }

.menubar {
  height: 23px;
  display: flex;
  align-items: center;
  justify-content: space-between;
  padding: 0 16px 1px 21px;
  background: linear-gradient(#e6edf5, #eef5fb);
  color: #2f3338;
  font-size: 13px;
  line-height: 20px;
  white-space: nowrap;
}
.menus, .status { display: flex; align-items: center; }
.menus { gap: 18px; }
.status { gap: 15px; }
.search { margin-left: 4px; }
.app-name { font-weight: 700; font-size: 14px; }
.battery { display: flex; align-items: center; gap: 4px; font-size: 12px; }
.ime { width: 16px; height: 16px; border-radius: 3px; background: #333940; color: #fff; font-size: 12px; line-height: 15px; text-align: center; font-weight: 500; }

.workspace { flex: 1; display: grid; grid-template-columns: 207px minmax(0, 1fr) 217px; }
.dock { display: flex; flex-direction: column; min-width: 0; background: var(--panel); }
.dock-left { padding-left: 2px; border-right: 6px solid #3c3c3d; border-bottom: 4px solid #505051; }
.dock-head { height: 21px; display: flex; justify-content: flex-end; align-items: center; background: linear-gradient(#4b4b4c, #5c5c5d); border-bottom: 1px solid #303132; }
.dock-head.start { justify-content: flex-start; }

.panel { display: flex; flex-direction: column; border-top: 1px solid var(--hi); min-width: 0; }
.tabs { height: 21px; display: flex; background: linear-gradient(#5c5c5d, #424243 17px, var(--panel) 17px); border-top: 1px solid #303132; }
.tab-menu { width: 18px; height: 16px; display: grid; place-items: center; }
.tab { width: 28px; height: 16px; display: flex; align-items: flex-end; justify-content: center; gap: 3px; background: #636467; border: 1px solid var(--line); border-top-color: var(--hi); border-left-color: var(--hi); overflow: hidden; white-space: nowrap; }
.tab.active { width: auto; height: 20px; align-items: center; padding: 0 2px; background: var(--panel); border-bottom: 0; border-right-color: var(--line); gap: 2px; }
.tab.active span { color: #d4d5d6; margin-bottom: 2px; }
.tab.active.wide { width: 152px; justify-content: flex-start; }
.fade { overflow: hidden; -webkit-mask-image: linear-gradient(90deg, #000 80%, transparent); mask-image: linear-gradient(90deg, #000 80%, transparent); }
.tab.ghost { opacity: .6; }
.tab.active.set { width: 41px; justify-content: space-between; padding: 0 5px; }
.tab.active.info-tab { width: 50px; gap: 5px; padding: 0 3px; }
.tab.active.layerprop { width: 117px; gap: 3px; }
.tab.active.layer-tab { width: 69px; gap: 4px; }

.group { padding-bottom: 2px; border-top: 1px solid var(--line); }
.group-btn { width: 149px; height: 25px; display: flex; align-items: center; gap: 4px; padding-left: 1px; background: var(--blue); border: 1px solid #25323b; border-radius: 2px; }
.scroller { display: flex; border-top: 1px solid var(--line); border-left: 1px solid var(--line); }
.gutter { width: 12px; flex: none; background: #67686b; border-left: 2px solid #57585a; border-right: 3px solid #7f8083; border-bottom: 2px solid var(--hi); box-shadow: inset 0 2px #505153; }
.subtools { flex: 1; padding-bottom: 19px; }
.subtool { width: 100%; height: 36px; display: flex; justify-content: space-between; padding: 3px 3px 2px 2px; border-bottom: 1px solid #2f3235; border-right: 1px solid #2f3235; }
.subtool span { align-self: flex-end; line-height: 15px; }
.subtool.selected { background: var(--blue); box-shadow: inset 0 0 0 1px #91abb9; }
.subtool.selected span { background: #74818a; padding-left: 5px; }
.foot { height: 21px; display: flex; justify-content: flex-end; align-items: center; gap: 4px; padding-right: 3px; border-top: 1px solid #5c5d5f; }
.props { flex: 1; padding: 2px 4px 0 15px; }
.label { display: block; font-size: 10px; line-height: 15px; }
.prop-row { display: flex; gap: 2px; padding-left: 15px; }
.prop-row button { width: 36px; height: 24px; display: grid; place-items: center; background: var(--btn); border: 1px solid #505153; border-radius: 3px; box-shadow: inset 0 1px #999a9d; }
.prop-row .pressed { background: #626367; box-shadow: none; }

.colors { padding: 2px 4px 0 3px; border-right: 3px double #303236; }
.set-row { display: flex; align-items: center; gap: 2px; }
.select { display: grid; align-items: center; height: 21px; background: var(--btn); border: 1px solid #4c4d50; border-radius: 3px; box-shadow: inset 0 1px #999a9d; }
.select > * { grid-area: 1 / 1; }
.select select { appearance: none; width: 100%; height: 19px; padding-right: 16px; text-align-last: center; }
.select svg { justify-self: end; margin-right: 2px; pointer-events: none; }
.set-row .select { width: 150px; }
.swatch-area { height: 145px; }
.swatches { flex: 1; display: grid; grid-template-columns: repeat(16, 10px); grid-auto-rows: 10px; gap: 1px; align-content: start; padding: 1px; }
.swatch.transparent { background: repeating-conic-gradient(#fff 0 25%, #555 0 50%) 0 0 / 5px 5px; }
.colors-foot { padding-right: 0; }
.chips { flex: 1; display: flex; gap: 24px; }
.chip { width: 8px; height: 8px; border: 1px solid #222; }
.red { background: #900; }
.green { background: #090; }
.blue { background: #00c; }

.editor { display: flex; flex-direction: column; min-width: 0; border-right: 5px solid #4c4c4d; }
.toolbar { height: 26px; display: flex; align-items: center; padding: 0 2px; background: linear-gradient(#828386, #747579); border-top: 1px solid var(--hi); border-bottom: 1px solid #222; }
.toolbar button { width: 24px; height: 24px; display: grid; place-items: center; }
.toolbar .on { background: #5f6063; border: 1px solid #494a4c; border-radius: 3px; }
.toolbar .clip { width: 41px; height: 20px; margin-right: 2px; background: linear-gradient(#fff, #d5d6d8); border-radius: 2px; }
.toolbar .home { width: 76px; height: 19px; margin-left: 2px; background: #e9e9eb; border-radius: 2px; color: #333; font-size: 9px; font-weight: 500; white-space: nowrap; }
.sep { width: 8px; height: 20px; background: linear-gradient(90deg, transparent 4px, #5a5b5d 4px 5px, #929396 5px 6px, transparent 6px); }
.window { flex: 1; display: flex; flex-direction: column; padding-left: 5px; padding-right: 6px; border-left: 1px solid #303031; border-bottom: 4px solid #3e3e3f; background: #4a4a4b; min-width: 0; }
.titlebar { height: 24px; display: flex; align-items: center; gap: 1px; color: #b9babb; font-size: 12px; white-space: nowrap; overflow: hidden; background: linear-gradient(#414142, #4f4f50); border-bottom: 1px solid #3b3b3c; }
.titlebar span { overflow: hidden; }
.doc-tabs { height: 20px; display: flex; justify-content: space-between; background: #4d4d4e; border-bottom: 1px solid #8e8f91; }
.doc-tab { display: flex; align-items: center; gap: 4px; padding: 0 7px 0 6px; margin-top: 1px; background: linear-gradient(#8a8b8d, #747578); font-size: 10px; }
.arrow { width: 11px; height: 11px; flex: none; display: grid; place-items: center; background: #7c7d80; border: 1px solid #999a9d; border-radius: 2px; color: #333; font: 8px/8px "DejaVu Sans", sans-serif; }
.arrow.tall { height: 18px; }
.stage { flex: 1; display: flex; border-top: 1px solid #222; }
.viewport { flex: 1; display: grid; place-items: center; padding: 0 3px 3px 0; background: #424242; }
.canvas { width: 500px; height: 500px; background: #fff; }
.vscroll, .hscroll { display: flex; background: #67686b; }
.vscroll { width: 11px; flex-direction: column; border-right: 1px solid #7b7c7e; }
.space { flex: 171; }
.thumb { flex: 259; display: grid; place-items: center; border: 1px solid #a0a1a4; border-radius: 2px; background: linear-gradient(90deg, #85868a, #6d6e72); }
.thumb::after { content: ""; width: 6px; height: 7px; background: repeating-linear-gradient(#444 0 1px, transparent 1px 3px); }
.navbar { height: 13px; display: flex; align-items: center; background: #707175; border-top: 1px solid #515254; }
.navbar > button { width: 20px; display: grid; place-items: center; }
.dial { height: 12px; display: grid; }
.dial > * { grid-area: 1 / 1; width: 100%; height: 12px; }
.dial input { min-width: 0; font-size: 11px; }
.zoom { width: 99px; }
.turn { width: 97px; margin-left: 3px; margin-right: 2px; }
.flip { transform: scaleX(-1); }
.hscroll { flex: 1; height: 12px; padding-right: 11px; border-bottom: 1px solid #858689; }
.hscroll .space { flex: 127; }
.hscroll .thumb { flex: 223; background: linear-gradient(#85868a, #6d6e72); }
.hscroll .thumb::after { width: 7px; height: 6px; background: repeating-linear-gradient(90deg, #444 0 1px, transparent 1px 3px); }

.dock-right { display: grid; grid-template-columns: 14px minmax(0, 1fr); border-bottom: 5px solid #c6c5c4; background: #3f3f40; }
.rail { background: linear-gradient(90deg, #4b4b4d, #6c6d70); border-right: 1px solid var(--line); }
.rail-head { width: 13px; height: 21px; display: grid; place-items: center; background: linear-gradient(#4b4b4c, #5c5c5d); border-bottom: 1px solid #303132; }
.dock-right .dock { border-bottom: 6px solid #49494a; border-left: 1px solid var(--line); }
.dock-right .dock-head { height: 21px; }
.info { height: 157px; padding: 0 0 0 6px; background: linear-gradient(90deg, #333 1px, var(--panel) 1px 2px, #333 2px 3px, var(--panel) 3px 4px, #333 4px 5px, var(--panel) 5px); border-bottom: 1px solid var(--line); }
.info p { margin: 0; font-size: 10px; line-height: 14px; white-space: nowrap; }
.info b { font-size: 11px; font-weight: 400; white-space: pre; }
.coords { display: grid; grid-template-columns: 83px 1fr; grid-auto-rows: 16px; margin: 3px 0 0 1px; padding-top: 3px; border-top: 1px solid #606164; font-size: 11px; }
.coords span { display: flex; align-items: center; gap: 1px; }
.dash { fill: none; stroke: #111; stroke-dasharray: 1 1; stroke-dashoffset: .5; shape-rendering: crispEdges; }
.layer-props { flex: 1; height: 117px; padding-top: 3px; }
fieldset { margin: 0 2px 0 5px; padding: 0 0 0 11px; border: 0; border-top: 1px solid #5f6063; height: 37px; min-width: 0; }
legend { margin-left: -8px; padding: 0 2px; font-size: 10px; line-height: 14px; }
.effects { width: 86px; height: 20px; margin-left: auto; display: flex; align-items: center; justify-content: space-between; padding: 0 2px 0 3px; background: var(--btn); border: 1px solid #4c4d50; border-radius: 3px; }
.expr { width: 119px; margin-top: 3px; }
.expr select { padding: 0 0 0 48px; text-align-last: left; }
.expr .rgb { justify-self: start; margin-left: 28px; }
.layer-tools { padding: 0 1px; border-top: 0; }
.tool-row { height: 21px; display: flex; align-items: center; }
.tool-row + .tool-row { height: 22px; border-top: 1px solid #636467; }
.mode { width: 101px; }
.opacity { appearance: none; flex: 1; min-width: 0; height: 20px; margin: 0 4px 0 6px; }
.opacity::-webkit-slider-runnable-track { height: 10px; border: 1px solid #444; background: linear-gradient(90deg, transparent, #c5c6c7), repeating-conic-gradient(#fff 0 25%, #bbb 0 50%) 0 0 / 8px 8px; }
.opacity::-webkit-slider-thumb { appearance: none; width: 4px; height: 20px; margin-top: -6px; background: #707174; border: 1px solid #4c4d4f; }
.mode + .opacity + output { font-size: 11px; margin-right: 2px; }
.boxed { width: 34px; height: 20px; display: flex; align-items: center; justify-content: center; gap: 2px; flex: none; margin-right: 3px; border: 1px solid #4c4d50; border-radius: 3px; background: var(--btn); }
.boxed.dim { width: 31px; margin: 0 0 0 1px; }
.tool { width: 20px; height: 20px; flex: none; display: grid; place-items: center; }
.commands { margin-bottom: 3px; }
.commands .first { margin-right: 23px; }
.layers { flex: 1; min-width: 0; margin-left: 3px; border-left: 1px solid var(--line); }
.layer { display: grid; grid-template-columns: 20px 18px 1fr; height: 41px; border-bottom: 1px solid #2f3235; }
.cell { display: grid; place-items: center; border-right: 1px solid #2f3235; }
.body { display: flex; align-items: center; gap: 2px; padding-left: 5px; }
.current .body { background: var(--blue); box-shadow: inset 0 0 0 1px #8ea6b2; }
.thumbnail { width: 36px; height: 36px; border: 1px solid #111; background: #fff; }
.thumbnail.checker { background: repeating-conic-gradient(#fff 0 25%, #c8c8c8 0 50%) 0 0 / 8px 8px; border: 2px solid #111; }
.meta { display: flex; flex-direction: column; gap: 5px; font-size: 11px; line-height: 14px; }
.paper { gap: 1px; font-size: 10px; }
.paper svg { margin-left: 2px; }
```
